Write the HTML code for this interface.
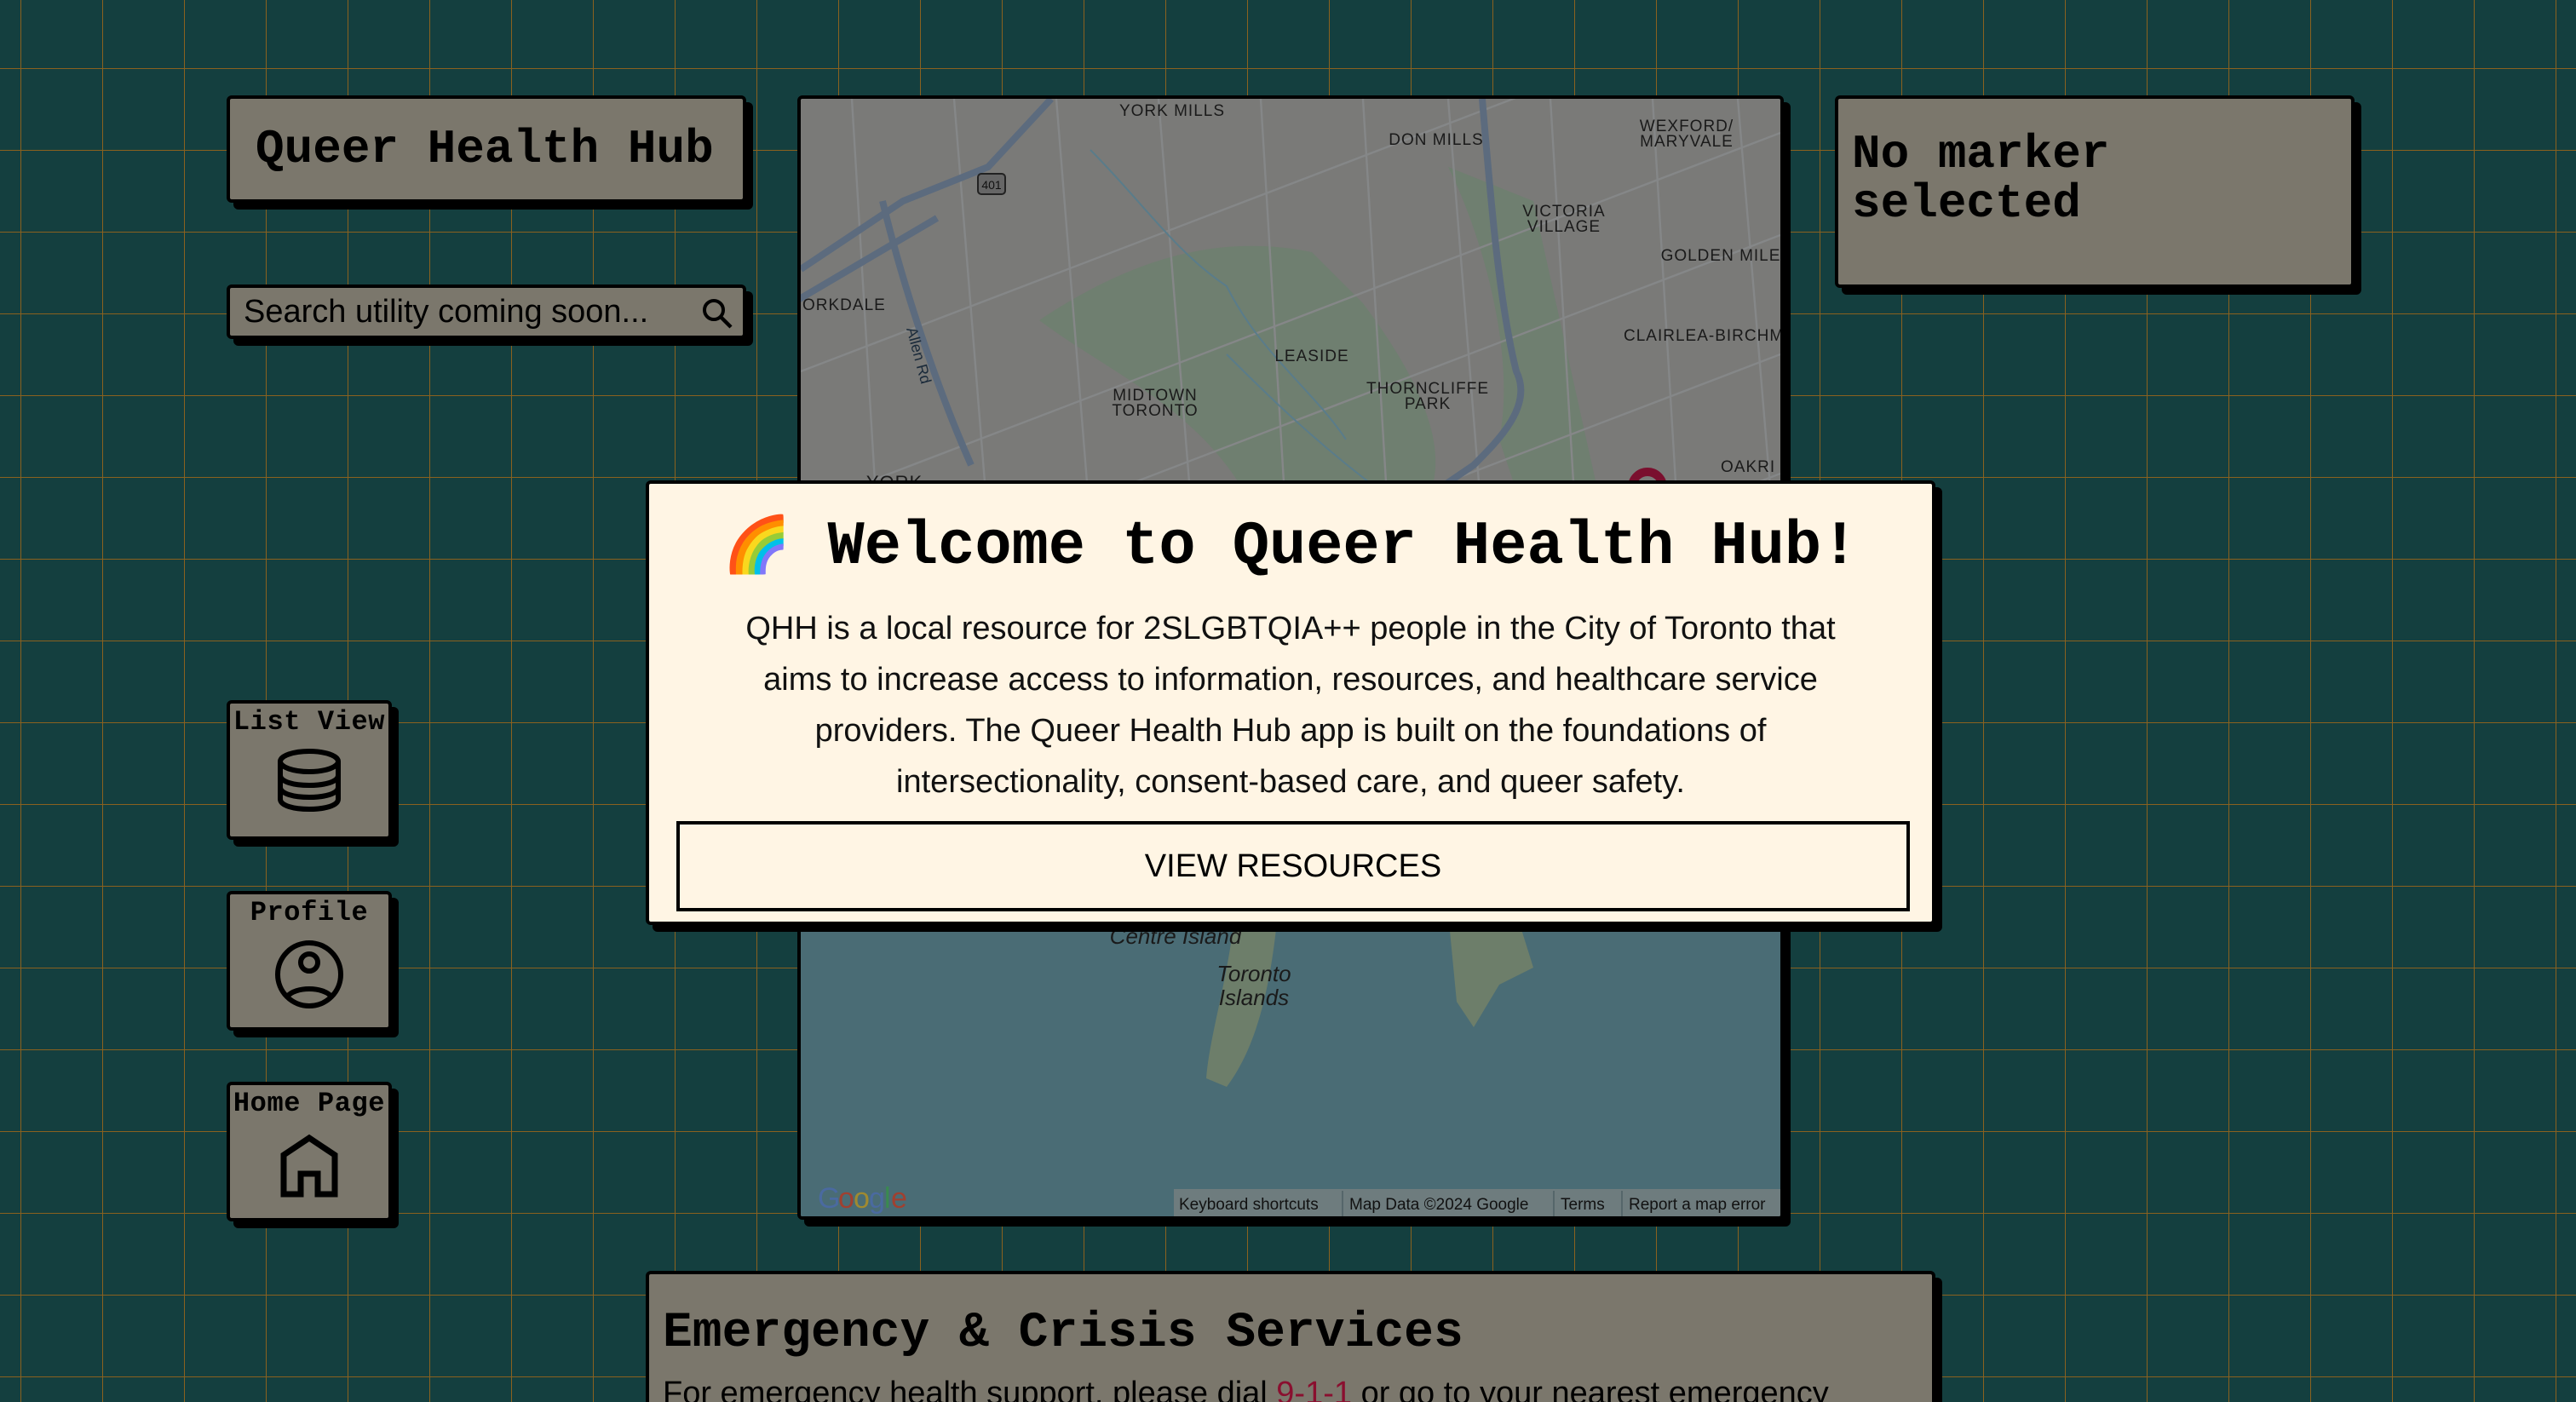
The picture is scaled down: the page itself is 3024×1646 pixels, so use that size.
<!DOCTYPE html>
<html><head><meta charset="utf-8">
<style>
html,body{margin:0;padding:0;}
html{width:3024px;height:1646px;overflow:hidden;}
body{width:1512px;height:823px;overflow:hidden;zoom:2;
background-color:#143f3f;
background-image:linear-gradient(90deg,#8a611f 1px,transparent 1px),linear-gradient(#8a611f 1px,transparent 1px);
background-size:48px 48px;background-position:12px 40px;
font-family:"Liberation Sans",sans-serif;position:relative;}
.box{position:absolute;background:#7b776c;border:2px solid #000;border-radius:3px;box-shadow:4px 4px 0 #000;box-sizing:border-box;}
.mono{font-family:"Liberation Mono","DejaVu Sans Mono",monospace;font-weight:bold;}
.side{width:97px;height:82px;text-align:center;}
.side .lbl{font-size:16px;line-height:20px;margin-top:1px;letter-spacing:0.3px;}
.side svg{display:block;margin:4px auto 0;}
</style></head><body>

<div class="box mono" style="left:133px;top:56px;width:305px;height:63px;font-size:28px;line-height:59px;padding-left:15px;">Queer Health Hub</div>

<div class="box" style="left:133px;top:167px;width:305px;height:32px;font-size:19px;line-height:28px;padding-left:8px;">Search utility coming soon...
<svg style="position:absolute;right:5px;top:5px" width="20" height="20" viewBox="0 0 20 20"><circle cx="8" cy="8" r="5.5" fill="none" stroke="#000" stroke-width="2"/><path d="M12 12 L18 18" stroke="#000" stroke-width="2.2"/></svg></div>

<div class="box" style="left:468px;top:56px;width:579px;height:660px;overflow:hidden;background:#7a7a78;">
<svg width="575" height="656" viewBox="0 0 575 656" style="position:absolute;left:0;top:0">
<rect width="575" height="656" fill="#7a7a78"/>
<path d="M140 130 C180 160 230 180 260 230 C280 260 300 270 340 270 L370 230 C380 200 360 160 330 120 L300 90 C250 80 200 90 140 130Z" fill="#6f7f70"/>
<path d="M380 40 C400 80 420 150 410 200 L430 260 L470 240 L450 150 L430 60Z" fill="#6f7f70"/>
<g stroke="#858788" stroke-width="1.2" fill="none">
<path d="M0 160 L575 -60"/><path d="M0 240 L575 20"/><path d="M0 300 L575 80"/><path d="M0 370 L575 150"/><path d="M0 440 L575 220"/><path d="M0 500 L575 290"/>
<path d="M30 0 L60 500"/><path d="M90 0 L130 500"/><path d="M150 0 L190 500"/><path d="M210 0 L250 500"/><path d="M270 0 L300 500"/><path d="M330 0 L360 500"/><path d="M380 0 L420 500"/><path d="M440 0 L470 500"/><path d="M500 0 L530 500"/><path d="M550 0 L575 300"/>
</g>
<g stroke="#5c6b7e" stroke-width="4" fill="none">
<path d="M0 100 L60 60 L110 40 L147 0"/>
<path d="M-5 120 L80 70"/>
<path d="M48 60 C60 110 80 170 100 215"/>
<path d="M400 0 C405 60 410 120 420 160 C430 180 410 200 395 215 L370 232"/>
</g>
<g stroke="#5a7c8a" stroke-width="1" fill="none"><path d="M170 30 C200 60 220 90 250 110 C270 150 300 170 320 200"/><path d="M250 150 C270 170 300 200 340 230"/></g>
<rect x="0" y="478" width="575" height="180" fill="#4a6c75"/>
<path d="M130 478 L160 470 L210 480 L255 478 C250 520 240 550 238 575 L250 580 C265 560 275 530 280 478 Z" fill="#6d7e6a"/>
<path d="M380 478 L420 478 L430 510 L410 520 L395 545 L385 530 Z" fill="#6d7e6a"/>
<g font-family="Liberation Sans,sans-serif" font-size="9.5" fill="#1a1a1a" text-anchor="middle" letter-spacing="0.5">
<text x="218" y="10">YORK MILLS</text>
<text x="373" y="27">DON MILLS</text>
<text x="520" y="19">WEXFORD/</text><text x="520" y="28">MARYVALE</text>
<text x="448" y="69">VICTORIA</text><text x="448" y="78">VILLAGE</text>
<text x="540" y="95">GOLDEN MILE</text>
<text x="1" y="124" text-anchor="start">ORKDALE</text>
<text x="483" y="142" text-anchor="start">CLAIRLEA-BIRCHM</text>
<text x="300" y="154">LEASIDE</text>
<text x="208" y="177">MIDTOWN</text><text x="208" y="186">TORONTO</text>
<text x="368" y="173">THORNCLIFFE</text><text x="368" y="182">PARK</text>
<text x="55" y="229" font-size="11">YORK</text>
<text x="540" y="219" text-anchor="start">OAKRI</text>
</g>
<text x="62" y="135" font-size="9" transform="rotate(75 62 135)" fill="#1a2a3a" font-family="Liberation Sans,sans-serif">Allen Rd</text>
<rect x="104" y="44" width="16" height="12" rx="2" fill="#666" stroke="#222" stroke-width="1"/><text x="112" y="53" font-size="7" text-anchor="middle" fill="#111" font-family="Liberation Sans,sans-serif">401</text>
<circle cx="497" cy="228" r="9" fill="none" stroke="#7a0f2e" stroke-width="5"/>
<g font-family="Liberation Sans,sans-serif" font-size="13" font-style="italic" fill="#1a1a1a" text-anchor="middle">
<text x="220" y="496">Centre Island</text><text x="266" y="518">Toronto</text><text x="266" y="532">Islands</text></g>
<g font-family="Liberation Sans,sans-serif" font-size="17">
<text x="10" y="651" fill="#4a6aa0">G</text><text x="22" y="651" fill="#a04030">o</text><text x="31" y="651" fill="#a08a30">o</text><text x="40" y="651" fill="#4a6aa0">g</text><text x="49" y="651" fill="#3a8a50">l</text><text x="53" y="651" fill="#a04030">e</text></g>
<rect x="219" y="640" width="356" height="16" fill="#6e7c7e"/>
<g font-family="Liberation Sans,sans-serif" font-size="9.5" fill="#111"><text x="222" y="652">Keyboard shortcuts</text><text x="322" y="652">Map Data ©2024 Google</text><text x="446" y="652">Terms</text><text x="486" y="652">Report a map error</text></g>
<g stroke="#55666a"><path d="M318 641V656M442 641V656M482 641V656"/></g>
</svg>
</div>

<div class="box mono" style="left:1077px;top:56px;width:305px;height:113px;font-size:28px;line-height:29px;padding:18px 0 0 8px;">No marker<br>selected</div>

<div class="box mono side" style="left:133px;top:411px;"><div class="lbl">List View</div>
<svg width="40" height="40" viewBox="0 0 40 40"><g fill="none" stroke="#000" stroke-width="3"><ellipse cx="20" cy="9" rx="17" ry="6"/><path d="M3 9V31C3 35 11 37 20 37S37 35 37 31V9"/><path d="M3 17C3 21 11 23 20 23S37 21 37 17"/><path d="M3 24C3 28 11 30 20 30S37 28 37 24"/></g></svg></div>

<div class="box mono side" style="left:133px;top:523px;"><div class="lbl">Profile</div>
<svg width="44" height="44" viewBox="0 0 44 44"><g fill="none" stroke="#000" stroke-width="3"><circle cx="22" cy="22" r="18.5"/><circle cx="22" cy="15" r="5"/><path d="M9 35C14 29 30 29 35 35"/></g></svg></div>

<div class="box mono side" style="left:133px;top:635px;"><div class="lbl">Home Page</div>
<svg width="40" height="42" viewBox="0 0 40 42"><path d="M5 39V16L20 6L35 16V39H25V27H15V39Z" fill="none" stroke="#000" stroke-width="3.5"/></svg></div>

<div class="box" style="left:379px;top:282px;width:757px;height:261px;background:#fff5e4;text-align:center;">
<div class="mono" style="font-size:36px;line-height:40px;margin-top:16px;"><span style="font-size:32px;font-family:'Noto Color Emoji','DejaVu Sans',sans-serif;font-weight:normal">🌈</span> Welcome to Queer Health Hub!</div>
<div style="font-size:19px;line-height:30px;margin:13px 46px 0;color:#111;">QHH is a local resource for 2SLGBTQIA++ people in the City of Toronto that aims to increase access to information, resources, and healthcare service providers. The Queer Health Hub app is built on the foundations of intersectionality, consent-based care, and queer safety.</div>
<div style="position:absolute;left:16px;top:198px;width:720px;height:49px;border:2px solid #000;font-size:19px;line-height:49px;">VIEW RESOURCES</div>
</div>

<div class="box" style="left:379px;top:746px;width:757px;height:100px;">
<div class="mono" style="font-size:29px;line-height:32px;margin:19px 0 0 8px;">Emergency &amp; Crisis Services</div>
<div style="font-size:19px;line-height:26px;margin:6px 0 0 8px;white-space:nowrap;">For emergency health support, please dial <span style="color:#8a0f2f">9-1-1</span> or go to your nearest emergency</div>
</div>

</body></html>
